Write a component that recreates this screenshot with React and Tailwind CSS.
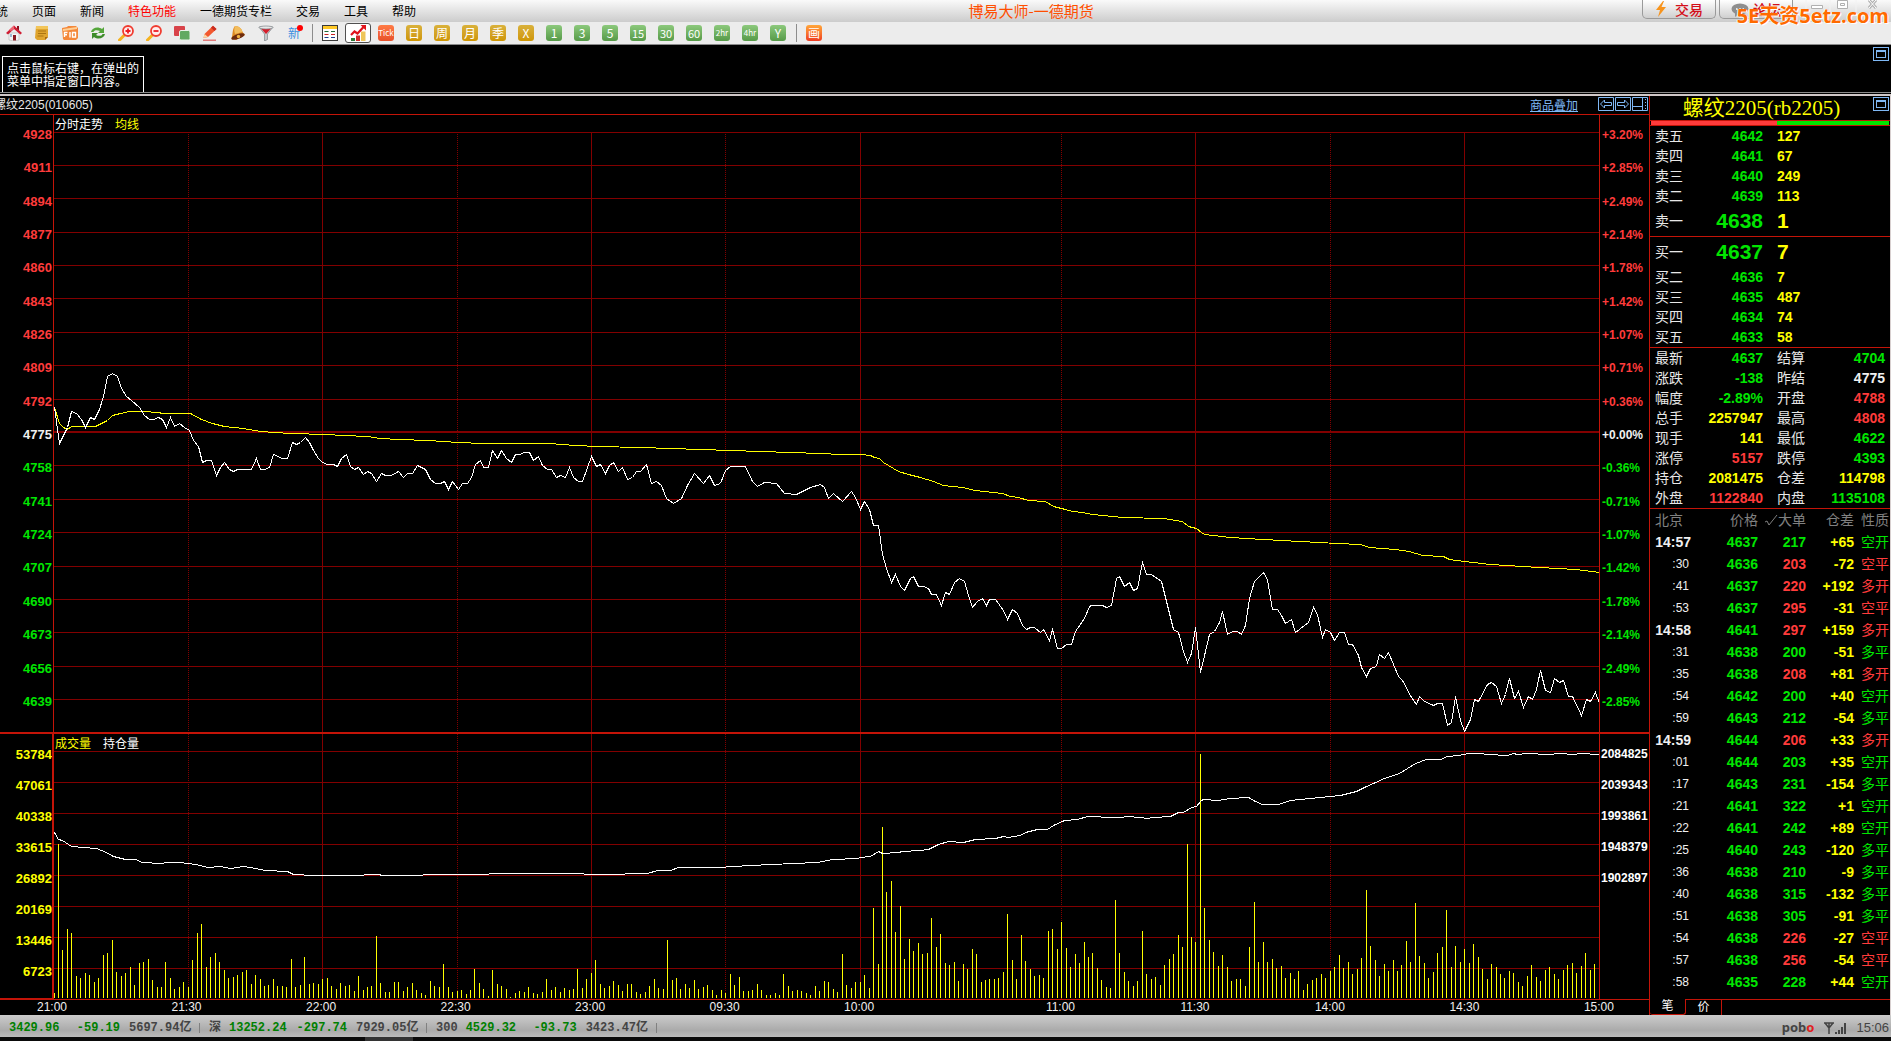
import { useState } from 'react';
import clsx from 'clsx';

const RED = 'text-[#ff3b3b]';
const GREEN = 'text-[#00e600]';
const YELLOW = 'text-[#ffff00]';
const WHITE = 'text-[#f0f0f0]';

const menus = ['系统', '页面', '新闻', '特色功能', '一德期货专栏', '交易', '工具', '帮助'];

const periods = [
  { label: 'Tick', tone: 'orange' },
  { label: '日', tone: 'gold' },
  { label: '周', tone: 'gold' },
  { label: '月', tone: 'gold' },
  { label: '季', tone: 'gold' },
  { label: 'X', tone: 'gold' },
  { label: '1', tone: 'green' },
  { label: '3', tone: 'green' },
  { label: '5', tone: 'green' },
  { label: '15', tone: 'green' },
  { label: '30', tone: 'green' },
  { label: '60', tone: 'green' },
  { label: '2hr', tone: 'green' },
  { label: '4hr', tone: 'green' },
  { label: 'Y', tone: 'green' },
];

const tones = {
  orange: 'bg-linear-to-b from-[#ff7a45] to-[#e8502a]',
  gold: 'bg-linear-to-b from-[#d9b13a] to-[#cf9600]',
  green: 'bg-linear-to-b from-[#8cc97c] to-[#569a48]',
  red: 'bg-linear-to-b from-[#ffa63a] to-[#ee3a22]',
};

const asks = [
  ['卖五', '4642', '127'],
  ['卖四', '4641', '67'],
  ['卖三', '4640', '249'],
  ['卖二', '4639', '113'],
  ['卖一', '4638', '1'],
];

const bids = [
  ['买一', '4637', '7'],
  ['买二', '4636', '7'],
  ['买三', '4635', '487'],
  ['买四', '4634', '74'],
  ['买五', '4633', '58'],
];

const stats = [
  ['最新', '4637', GREEN, '结算', '4704', GREEN],
  ['涨跌', '-138', GREEN, '昨结', '4775', WHITE],
  ['幅度', '-2.89%', GREEN, '开盘', '4788', RED],
  ['总手', '2257947', YELLOW, '最高', '4808', RED],
  ['现手', '141', YELLOW, '最低', '4622', GREEN],
  ['涨停', '5157', RED, '跌停', '4393', GREEN],
  ['持仓', '2081475', YELLOW, '仓差', '114798', YELLOW],
  ['外盘', '1122840', RED, '内盘', '1135108', GREEN],
];

// time, price, lots, lots colour, open interest change, kind, kind colour
const ticks = [
  ['14:57', '4637', '217', GREEN, '+65', '空开', GREEN],
  [':30', '4636', '203', RED, '-72', '空平', RED],
  [':41', '4637', '220', RED, '+192', '多开', RED],
  [':53', '4637', '295', RED, '-31', '空平', RED],
  ['14:58', '4641', '297', RED, '+159', '多开', RED],
  [':31', '4638', '200', GREEN, '-51', '多平', GREEN],
  [':35', '4638', '208', RED, '+81', '多开', RED],
  [':54', '4642', '200', GREEN, '+40', '空开', GREEN],
  [':59', '4643', '212', GREEN, '-54', '多平', GREEN],
  ['14:59', '4644', '206', RED, '+33', '多开', RED],
  [':01', '4644', '203', GREEN, '+35', '空开', GREEN],
  [':17', '4643', '231', GREEN, '-154', '多平', GREEN],
  [':21', '4641', '322', GREEN, '+1', '空开', GREEN],
  [':22', '4641', '242', GREEN, '+89', '空开', GREEN],
  [':25', '4640', '243', GREEN, '-120', '多平', GREEN],
  [':36', '4638', '210', GREEN, '-9', '多平', GREEN],
  [':40', '4638', '315', GREEN, '-132', '多平', GREEN],
  [':51', '4638', '305', GREEN, '-91', '多平', GREEN],
  [':54', '4638', '226', RED, '-27', '空平', RED],
  [':57', '4638', '256', RED, '-54', '空平', RED],
  [':58', '4635', '228', GREEN, '+44', '空开', GREEN],
];

const prices = [
  4928, 4911, 4894, 4877, 4860, 4843, 4826, 4809, 4792, 4775, 4758, 4741, 4724, 4707, 4690, 4673, 4656, 4639,
];
const percents = [
  '+3.20%', '+2.85%', '+2.49%', '+2.14%', '+1.78%', '+1.42%', '+1.07%', '+0.71%', '+0.36%', '+0.00%',
  '-0.36%', '-0.71%', '-1.07%', '-1.42%', '-1.78%', '-2.14%', '-2.49%', '-2.85%',
];
const volumeTicks = [53784, 47061, 40338, 33615, 26892, 20169, 13446, 6723];
const interestTicks = [2084825, 2039343, 1993861, 1948379, 1902897];

const priceRows = [132, 165, 198, 232, 265, 298, 332, 365, 399, 432, 465, 499, 532, 566, 599, 632, 666, 699];
const volumeRows = [751, 782, 813, 844, 875, 906, 937, 968];
const solidCols = [322, 591, 860, 1195, 1464];
const dottedCols = [188, 457, 725, 1061, 1330];

const priceLine =
  '54,407 59,443 63,435 67,427 71,411 76,413 81,419 85,427 90,417 94,419 99,409 103,396 107,376 112,373 117,376 121,388 126,396 131,400 139,407 144,415 149,419 153,419 158,417 162,419 166,427 170,417 174,426 179,423 184,427 189,430 193,440 198,446 202,462 206,460 211,460 216,475 220,467 224,462 229,469 233,471 237,469 251,469 256,458 260,469 264,469 269,467 273,454 282,458 287,458 292,442 296,444 300,442 305,437 309,442 313,450 318,458 322,462 327,464 333,464 337,466 341,458 346,454 350,466 354,469 358,467 363,474 367,471 371,473 376,481 381,473 385,475 391,475 398,471 403,477 407,473 412,473 417,465 425,469 430,479 435,483 440,483 444,481 448,489 452,481 458,489 462,483 467,483 471,477 475,464 480,460 483,467 488,467 492,450 497,458 501,450 506,458 511,462 515,454 519,454 524,452 529,452 533,460 538,456 542,465 547,469 551,469 556,477 560,475 565,477 569,467 573,477 578,481 582,481 591,456 596,466 600,464 605,473 609,465 613,462 618,471 622,467 627,479 632,477 636,471 640,471 646,464 651,483 656,481 661,485 666,498 673,503 681,498 687,485 694,473 703,483 709,475 714,485 720,483 725,470 730,466 745,466 752,481 757,486 764,482 776,483 784,493 796,494 810,487 820,484 824,487 828,498 833,493 842,501 851,491 855,497 860,509 864,501 869,509 873,525 878,525 882,554 886,568 891,582 895,574 900,586 904,590 910,578 913,576 918,586 923,586 928,588 931,594 936,594 941,605 945,592 949,594 954,582 959,578 964,581 968,595 972,607 977,601 982,598 986,605 989,599 995,599 1003,610 1007,619 1012,609 1017,613 1022,625 1026,629 1030,627 1034,627 1040,632 1043,629 1049,640 1052,629 1057,648 1061,648 1066,644 1071,644 1075,631 1084,618 1089,606 1091,605 1102,605 1106,607 1111,605 1116,578 1119,576 1124,586 1129,582 1133,590 1137,588 1142,562 1146,574 1151,574 1161,581 1173,629 1178,632 1183,651 1187,662 1191,653 1195,627 1200,672 1209,634 1214,631 1219,622 1222,611 1227,634 1232,631 1237,631 1241,634 1245,625 1249,598 1254,581 1263,572 1267,579 1272,609 1277,609 1281,615 1285,623 1291,619 1295,632 1308,622 1313,607 1317,614 1322,637 1325,629 1330,632 1334,640 1339,632 1344,632 1348,644 1352,644 1358,655 1361,667 1366,676 1370,668 1376,666 1379,654 1384,658 1388,652 1393,664 1398,676 1402,680 1411,697 1416,704 1419,696 1424,701 1433,705 1437,703 1442,703 1447,725 1451,722 1455,696 1460,720 1464,731 1470,719 1474,699 1478,701 1487,684 1491,682 1496,686 1501,703 1505,694 1509,678 1514,698 1518,691 1523,707 1528,696 1532,699 1536,689 1540,670 1545,690 1550,692 1554,678 1559,682 1563,680 1568,696 1572,696 1581,715 1586,699 1590,701 1595,692 1599,703';

const averageLine =
  '54,407 59,423 63,427 67,429 71,426 79,426 95,426 101,423 107,420 112,415 120,413 129,411 145,411 165,413 190,413 201,419 212,423 224,426 243,428 260,431 290,433 326,434 343,435 367,436 380,438 398,439 428,440 458,442 483,443 549,443 575,445 597,446 640,447 700,449 760,451 820,453 840,454 860,454 870,455 874,457 879,458 883,462 888,465 898,471 908,474 920,477 933,481 943,485 962,487 975,490 1002,493 1010,496 1018,497 1028,500 1045,501 1053,506 1065,509 1072,511 1082,512 1092,514 1113,516 1122,517 1163,518 1182,521 1188,526 1196,528 1201,532 1204,534 1230,537 1263,539 1300,541 1337,543 1360,544 1369,547 1395,549 1409,551 1422,555 1443,556 1449,559 1464,561 1490,564 1522,566 1557,568 1575,569 1599,572';

const interestLine =
  '54,832 58,839 62,840 71,846 83,847 96,848 106,852 113,856 125,859 135,859 142,862 160,863 167,862 180,862 195,864 208,867 220,866 230,868 243,866 255,868 265,870 287,871 293,874 313,875 360,875 367,874 378,874 382,875 413,875 433,874 457,874 480,874 497,873 527,873 577,873 590,874 613,874 637,873 647,873 657,870 670,870 678,867 718,867 750,865 793,863 817,862 832,859 857,858 860,857 870,856 878,851 882,853 898,852 902,851 920,850 928,849 938,844 948,841 963,842 975,839 995,838 1003,836 1008,837 1020,835 1025,832 1037,829 1047,829 1053,825 1064,820 1077,819 1087,816 1113,817 1120,817 1127,816 1140,817 1147,818 1153,817 1170,816 1178,812 1183,812 1191,807 1196,806 1201,800 1203,799 1217,800 1230,798 1248,797 1255,801 1262,804 1278,804 1290,800 1320,797 1340,795 1356,791 1364,787 1384,778 1399,773 1415,763 1426,759 1440,759 1447,756 1458,755 1468,753 1480,753 1487,754 1507,755 1513,753 1517,754 1527,753 1547,754 1560,753 1573,754 1580,753 1599,754';

// one bar per minute, 21:00 to 15:00
const volumes = [
  5, 154, 48, 69, 65, 22, 20, 25, 23, 16, 20, 43, 45, 58, 26, 22, 25, 31, 13, 35, 36, 39, 18, 11, 11, 36, 20, 9, 11, 16,
  11, 38, 65, 74, 31, 41, 45, 36, 28, 20, 21, 23, 26, 28, 14, 23, 19, 12, 13, 19, 12, 12, 11, 39, 11, 13, 41, 14, 15, 14,
  19, 20, 12, 9, 15, 12, 13, 7, 22, 8, 11, 12, 62, 15, 6, 6, 16, 16, 7, 11, 15, 8, 5, 3, 17, 12, 11, 34, 11, 6,
  7, 8, 4, 8, 29, 15, 9, 2, 28, 14, 12, 9, 1, 5, 7, 6, 11, 5, 4, 6, 19, 8, 11, 6, 10, 8, 9, 29, 10, 19,
  25, 38, 14, 10, 12, 17, 13, 7, 14, 14, 6, 4, 6, 12, 19, 10, 9, 58, 18, 20, 9, 14, 10, 18, 9, 11, 13, 8, 3, 8,
  5, 24, 13, 21, 7, 7, 8, 14, 8, 3, 3, 5, 3, 24, 12, 7, 8, 7, 5, 3, 12, 7, 17, 16, 9, 6, 44, 13, 10, 16,
  16, 23, 10, 90, 34, 171, 106, 117, 66, 92, 39, 59, 47, 55, 44, 45, 80, 51, 64, 35, 33, 36, 17, 34, 29, 49, 44, 16, 18, 19,
  19, 20, 26, 84, 38, 19, 63, 37, 29, 22, 23, 20, 67, 69, 49, 76, 50, 31, 44, 35, 56, 41, 45, 30, 18, 11, 10, 98, 45, 26,
  17, 12, 17, 67, 24, 19, 21, 13, 33, 39, 44, 63, 51, 154, 61, 56, 244, 90, 58, 46, 32, 43, 31, 17, 19, 19, 12, 51, 96, 36,
  56, 36, 39, 30, 32, 20, 25, 19, 27, 8, 14, 18, 20, 24, 20, 27, 31, 43, 30, 36, 24, 29, 40, 108, 52, 38, 22, 34, 27, 38,
  27, 33, 57, 36, 95, 42, 35, 20, 26, 45, 51, 88, 31, 52, 36, 49, 35, 54, 41, 29, 19, 34, 31, 24, 20, 27, 25, 16, 12, 22,
  33, 21, 17, 28, 31, 24, 19, 28, 33, 35, 25, 32, 45, 28, 34, 51,
];

const minuteWidth = 1545 / 345;
const volumePath = volumes.map((h, i) => `M${Math.floor(54 + i * minuteWidth) + 0.5} 998V${998 - h}`).join('');

const quotes = [
  { name: '', price: '3429.96', change: '-59.19', amount: '5697.94亿', width: 'w-[48px]' },
  { name: '深', price: '13252.24', change: '-297.74', amount: '7929.05亿', width: 'w-[55px]' },
  { name: '300', price: '4529.32', change: '-93.73', amount: '3423.47亿', width: 'w-[48px]' },
];

const toolIcons = {
  首页: (
    <>
      <path d="M11 1h2v4h-2z" fill="#8e1220" />
      <path d="M3 8h10v7l-5 1-5-1z" fill="#f4f4f4" stroke="#a9a9a9" strokeWidth=".5" />
      <path d="M8 .5 16 8l-1.6 1.6L8 4 2 9.600 0 8z" fill="#cf1d33" />
      <path d="M8 .5 3 5l2 1 3-2z" fill="#ef6472" />
      <path d="M7 10h3v5.500H7z" fill="#8b1a22" />
      <path d="M4 9h2v3H4z" fill="#9db9d2" />
    </>
  ),
  备忘: (
    <>
      <path d="M2 1h12v11l-3 3H3L1 13z" fill="#e0a52e" />
      <path d="M2 1h12v3H2z" fill="#f2c55a" />
      <path d="M4 6h8M4 8.500h8M3.500 11h6" stroke="#ab7410" strokeWidth="1" />
      <path d="m14 12-3 3v-3z" fill="#a8690b" />
    </>
  ),
  F10: (
    <>
      <path d="M0 3 5 2l1-1h8l2 2v10l-2 2H2L1 14z" fill="#f4883a" />
      <path d="m1 4 14-2v2L1 6z" fill="#ffd096" />
      <path d="M2.500 12V7.500h3M2.500 9.800h2.500M8 7v5.500M10.500 7.500h3v4.500h-3z" stroke="#fff" strokeWidth="1.400" fill="none" />
    </>
  ),
  刷新: (
    <>
      <path d="M1 7c1-4.500 7-6 11-3l2-2v6H8l2-2C7 4.500 4 5 3.500 7z" fill="#54a63a" />
      <path d="M15 9c-1 4.500-7 6-11 3l-2 2V8h6l-2 2c3 1.500 6 1 6.500-1z" fill="#3d8c2a" />
    </>
  ),
  放大: (
    <>
      <path d="m1.500 15 5-5" stroke="#f5b321" strokeWidth="3" strokeLinecap="round" />
      <circle cx="10" cy="6" r="5" fill="#ffecec" stroke="#f03c30" strokeWidth="1.800" />
      <path d="M7.500 6h5M10 3.500v5" stroke="#ee1c25" strokeWidth="1.800" />
    </>
  ),
  缩小: (
    <>
      <path d="m1.500 15 5-5" stroke="#f5b321" strokeWidth="3" strokeLinecap="round" />
      <circle cx="10" cy="6" r="5" fill="#ffecec" stroke="#f03c30" strokeWidth="1.800" />
      <path d="M7.500 6h5" stroke="#ee1c25" strokeWidth="1.800" />
    </>
  ),
  叠加: (
    <>
      <rect x="0" y="1" width="11" height="10" rx="1" fill="#d8434a" />
      <rect x="5.500" y="5.500" width="10.500" height="9.500" rx="1.500" fill="#62aa62" stroke="#e8f3e8" strokeWidth="1" />
    </>
  ),
  画线: (
    <>
      <path d="m1.500 13 1-4L11 .8 14.500 4 6 12z" fill="#f2582f" />
      <path d="m11 .8 3.500 3.200-2 2L9 2.800z" fill="#c92d20" />
      <path d="m1.500 13 1-4L6 12z" fill="#f9d7a2" />
      <path d="M1 15.200h13" stroke="#e05d5d" strokeWidth="1.200" />
    </>
  ),
  预警: (
    <>
      <path d="M5 1c4 0 7 3 7.500 6l2.500 3-9 5-4.500-1.500C3 10 2 4 5 1z" fill="#dd8a22" />
      <path d="M5 1c4 0 7 3 7.500 6L5 9C4 6 4 3 5 1z" fill="#f3bd5c" />
      <ellipse cx="8" cy="11.500" rx="7" ry="2.400" transform="rotate(-20 8 11.500)" fill="#6d2c0e" />
      <circle cx="8.500" cy="11.500" r="1.700" fill="#f0b23f" />
    </>
  ),
  选股: (
    <>
      <path d="M1 2h14L9.500 9v5.500L6.500 16V9z" fill="#c4c7ca" stroke="#80858a" strokeWidth=".7" />
      <path d="M3 3.500h10L8 9z" fill="#d51f2c" />
      <ellipse cx="8" cy="2.500" rx="7" ry="1.500" fill="#e8e8e8" stroke="#80858a" strokeWidth=".7" />
    </>
  ),
};

const tableIcon = (
  <>
    <rect x=".5" y=".5" width="15" height="15" fill="#fff" stroke="#3a3a3a" />
    <path d="M1 1h14v3H1z" fill="#ffc928" />
    <path d="M2.500 6.500h4M9 6.500h4" stroke="#1f6b38" strokeWidth="1.200" />
    <path d="M2.500 9.500h4M9 9.500h4" stroke="#c22" strokeWidth="1.200" />
    <path d="M2.500 12.500h4M9 12.500h4" stroke="#1d3e8c" strokeWidth="1.200" />
  </>
);

const trendIcon = (
  <>
    <path d="M1 13h4v3H1z" fill="#2e7a3a" />
    <path d="M6 10.500h4V16H6z" fill="#d42a2a" />
    <path d="M11 6.500h4.500V16H11z" fill="#eec55a" />
    <path d="m1 10 3.500-3.500 3 2L14 1.500" stroke="#e0141c" strokeWidth="2.200" fill="none" />
    <path d="M10.500 0H16v5.500z" fill="#e0141c" />
  </>
);

const ToolButton = ({ label, active, children }) => (
  <button
    aria-label={label}
    className={clsx(
      'w-[26px] h-5 mx-px flex items-center justify-center rounded-[3px]',
      active && 'bg-white border border-[#505050]'
    )}
  >
    {children}
  </button>
);

const Glyph = ({ children }) => (
  <svg viewBox="0 0 16 16" className="w-4 h-4 shrink-0">
    {children}
  </svg>
);

const PeriodBadge = ({ label, tone }) => (
  <span
    className={clsx(
      'w-4 h-4 rounded-[3px] flex items-center justify-center text-white leading-4',
      label.length > 2 ? 'text-[8px]' : label.length > 1 ? 'text-[11px]' : 'text-xs',
      tones[tone]
    )}
  >
    {label}
  </span>
);

const WindowIcon = () => (
  <button aria-label="最大化窗口" className="w-4 h-[14px] border border-[#7fb8f5] flex items-center justify-center">
    <span className="w-[10px] h-2 border border-t-2 border-[#7fb8f5]" />
  </button>
);

const MenuBar = () => (
  <header className="h-[22px] flex items-center bg-linear-to-b from-[#fafafa] to-[#cccccc] text-black">
    <nav className="flex -ml-[28px]">
      {menus.map((m) => (
        <button key={m} className={clsx('px-3 text-xs leading-5 whitespace-nowrap', m === '特色功能' && 'text-[#ff0000]')}>
          {m}
        </button>
      ))}
    </nav>
    <h1 className="flex-1 pr-2 text-center text-[15px] leading-5 text-[#ff4e00]">博易大师-一德期货</h1>
    <div className="relative flex w-[249px] h-[22px]">
      <button className="w-[74px] h-[19px] border border-t-0 border-[#9a9a9a] rounded-b-[5px] bg-linear-to-b from-white to-[#cfcfcf] flex items-center justify-center gap-2 text-sm font-medium leading-4 text-[#d40f1a]">
        <svg viewBox="0 0 12 16" className="w-3 h-4">
          <path d="M8 0 1 9h4l-2 7 8-10H6.500L9 0z" fill="#f7941d" />
        </svg>
        交易
      </button>
      <button className="w-[74px] h-[19px] ml-[3px] border border-t-0 border-[#9a9a9a] rounded-b-[5px] bg-linear-to-b from-white to-[#cfcfcf] flex items-center justify-center gap-1 text-sm font-medium leading-4 text-[#d40f1a]">
        <svg viewBox="0 0 18 16" className="w-[18px] h-4">
          <ellipse cx="9" cy="8" rx="8.500" ry="5.500" fill="#8e8e8e" />
          <path d="m4 11 0 5 5-4z" fill="#8e8e8e" />
          <path d="M5 8h1.500M8.300 8h1.500M11.600 8H13" stroke="#fff" strokeWidth="1.600" />
        </svg>
        论坛
      </button>
      <svg viewBox="0 0 90 16" className="w-[90px] h-4 ml-[3px]" fill="none" stroke="#b0b0b0">
        <path d="M10 0v16M34 0v16M60 0v16" stroke="#f2f2f2" />
        <path d="M15.500 5.500h11v3h-11z" fill="#fff" />
        <path d="M41.500.5h10v8h-10zM44.500 3.500h4v2h-4z" fill="#fff" />
        <path d="m73 0 7 8M80 0l-7 8" strokeWidth="3" />
        <path d="m73 0 7 8M80 0l-7 8" stroke="#fff" />
      </svg>
      <span className="absolute right-[2px] top-[2px] z-10 whitespace-nowrap font-['Open_Sans','Noto_Sans_CJK_SC',sans-serif] text-xl leading-7 font-bold text-[#ff6a00] [text-shadow:1px_1px_0_#fff,-1px_0_0_#fff]">
        5E天资5etz.com
      </span>
    </div>
  </header>
);

const Toolbar = () => (
  <div className="h-[23px] flex items-center bg-[#ececec] border-b border-[#8a8a8a]">
    {Object.entries(toolIcons).map(([name, icon]) => (
      <ToolButton key={name} label={name}>
        <Glyph>{icon}</Glyph>
      </ToolButton>
    ))}
    <ToolButton label="新">
      <span className="relative text-xs leading-4 text-[#3d8fe0]">
        新
        <i className="absolute -right-[3px] top-0 w-[6px] h-[6px] rounded-full bg-[#ff0000]" />
      </span>
    </ToolButton>
    <span className="w-px h-[18px] mx-[3px] ml-1 bg-[#8c8c8c]" />
    <ToolButton label="报价表">
      <Glyph>{tableIcon}</Glyph>
    </ToolButton>
    <ToolButton label="分时图" active>
      <Glyph>{trendIcon}</Glyph>
    </ToolButton>
    {periods.map((p) => (
      <ToolButton key={p.label} label={p.label}>
        <PeriodBadge {...p} />
      </ToolButton>
    ))}
    <span className="w-px h-[18px] mx-[3px] ml-1 bg-[#8c8c8c]" />
    <ToolButton label="画">
      <PeriodBadge label="画" tone="red" />
    </ToolButton>
  </div>
);

const AxisLabels = ({ items, className, itemClass }) => (
  <div className={clsx('flex flex-col font-["Liberation_Sans",sans-serif] font-bold', className)}>
    {items.map((item, i) => (
      <span key={item} className={itemClass(i)}>
        {item}
      </span>
    ))}
  </div>
);

const levelColor = (i) => clsx('leading-4', i < 9 ? RED : i === 9 ? WHITE : GREEN);

const GridColumns = ({ top, bottom }) => (
  <>
    {solidCols.map((x) => (
      <line key={x} x1={x + 0.5} x2={x + 0.5} y1={top} y2={bottom} vectorEffect="non-scaling-stroke" />
    ))}
    {dottedCols.map((x) => (
      <line key={x} x1={x + 0.5} x2={x + 0.5} y1={top} y2={bottom} strokeDasharray="1 1" vectorEffect="non-scaling-stroke" />
    ))}
  </>
);

const PriceChart = () => (
  <div className="flex border-b-2 border-[#c41408]">
    <AxisLabels
      items={prices}
      className="w-[53px] pr-px pt-3 pb-[22px] justify-between text-right text-[13px]"
      itemClass={levelColor}
    />
    <div className="flex-1 min-w-0 border-x border-[#c41408]">
      <div className="h-[17px] flex gap-3 pl-px text-xs leading-[17px]">
        <span className="text-white">分时走势</span>
        <span className={YELLOW}>均线</span>
      </div>
      <svg viewBox="54 132 1545 600" preserveAspectRatio="none" shapeRendering="crispEdges" className="block w-full h-[600px]">
        <g stroke="#820000">
          {priceRows.map((y, i) => (
            <line key={y} x1="54" x2="1599" y1={i === 9 ? y : y + 0.5} y2={i === 9 ? y : y + 0.5} strokeWidth={i === 9 ? 2 : 1} />
          ))}
          <GridColumns top={132} bottom={732} />
        </g>
        <g fill="none" transform="translate(.5 .5)">
          <polyline points={averageLine} stroke="#ffff00" vectorEffect="non-scaling-stroke" />
          <polyline points={priceLine} stroke="#ffffff" vectorEffect="non-scaling-stroke" />
        </g>
      </svg>
    </div>
    <AxisLabels items={percents} className="w-[49px] pt-3 pb-[22px] pl-[2px] justify-between text-xs" itemClass={levelColor} />
  </div>
);

const VolumeChart = () => (
  <div className="flex border-b border-[#c41408]">
    <AxisLabels
      items={volumeTicks}
      className="w-[52px] pt-[5px] text-right text-[13px] border-b border-[#c41408]"
      itemClass={() => clsx('leading-[31px]', YELLOW)}
    />
    <div className="relative flex-1 min-w-0 border-l-2 border-r border-[#c41408]">
      <div className="absolute left-px top-[1px] flex gap-3 text-xs leading-4">
        <span className={YELLOW}>成交量</span>
        <span className="text-white">持仓量</span>
      </div>
      <svg viewBox="54 734 1545 265" preserveAspectRatio="none" shapeRendering="crispEdges" className="block w-full h-[265px]">
        <g stroke="#820000">
          {volumeRows.map((y) => (
            <line key={y} x1="54" x2="1599" y1={y + 0.5} y2={y + 0.5} />
          ))}
          <GridColumns top={734} bottom={999} />
        </g>
        <path d={volumePath} stroke="#ffff00" fill="none" vectorEffect="non-scaling-stroke" />
        <polyline
          points={interestLine}
          transform="translate(.5 .5)"
          stroke="#ffffff"
          fill="none"
          vectorEffect="non-scaling-stroke"
        />
      </svg>
    </div>
    <AxisLabels items={interestTicks} className="w-[49px] pt-[5px] pl-px text-xs" itemClass={() => 'leading-[31px] text-white'} />
  </div>
);

const TimeAxis = () => (
  <div className="flex ml-[52px] mr-[50px] h-[15px] font-['Liberation_Sans',sans-serif] text-xs leading-[15px] text-[#f0f0f0]">
    {['21:00', '21:30', '22:00', '22:30', '23:00', '09:30', '10:00', '11:00', '11:30', '14:00', '14:30'].map((t) => (
      <span key={t} className={clsx('min-w-0', t === '10:00' ? 'flex-[45]' : 'flex-[30]')}>
        <span className="-ml-[15px]">{t}</span>
      </span>
    ))}
    <span className="w-0 -ml-[15px] mr-[15px] whitespace-nowrap">15:00</span>
  </div>
);

const ChartPane = () => (
  <section className="flex-1 min-w-0">
    <div className="h-[19px] flex items-center border-b border-[#c41408] text-xs">
      <h2 className="flex-1 -ml-[6px] leading-4 text-[#e8e8e8] font-['Liberation_Sans','Noto_Sans_CJK_SC',sans-serif]">
        螺纹2205(010605)
      </h2>
      <a href="#overlay" className="mr-5 leading-4 underline text-[#7fb8f5]">
        商品叠加
      </a>
      <div className="flex gap-px pr-px pb-[2px]">
        <button aria-label="前一个">
          <svg viewBox="0 0 16 14" className="w-4 h-[14px]" fill="none" stroke="#7fb8f5">
            <path d="M.5.5h15v13H.5zM2.500 7l4-4v2.500h7v3h-7V11z" />
          </svg>
        </button>
        <button aria-label="后一个">
          <svg viewBox="0 0 16 14" className="w-4 h-[14px]" fill="none" stroke="#7fb8f5">
            <path d="M.5.5h15v13H.5zM13.500 7l-4-4v2.500h-7v3h7V11z" />
          </svg>
        </button>
        <button aria-label="布局">
          <svg viewBox="0 0 16 14" className="w-4 h-[14px]" fill="none" stroke="#7fb8f5">
            <path d="M.5.5h15v13H.5zM1 9.500h9.500V1M10.500 9v4M13.500 2v1M13.500 5v1M13.500 8v1M13.500 11v1" />
          </svg>
        </button>
      </div>
    </div>
    <PriceChart />
    <VolumeChart />
    <TimeAxis />
  </section>
);

const BookTable = ({ rows, best }) => (
  <table className="w-full table-fixed border-b border-[#c41408] border-separate border-spacing-0">
    <colgroup>
      <col className="w-10" />
      <col className="w-[73px]" />
      <col />
    </colgroup>
    <tbody>
      {rows.map(([name, price, lots]) => {
        const big = name === best;
        return (
          <tr key={name} className={big ? 'h-[30px]' : 'h-5'}>
            <th className="p-0 pl-[5px] text-left text-sm leading-5 font-normal text-[#e8e8e8]">{name}</th>
            <td className={clsx('p-0 text-right font-bold leading-5', GREEN, big ? 'text-[21px]' : 'text-sm')}>{price}</td>
            <td className={clsx('p-0 pl-[14px] font-bold leading-5', YELLOW, big ? 'text-[21px]' : 'text-sm')}>{lots}</td>
          </tr>
        );
      })}
    </tbody>
  </table>
);

const QuotePanel = () => {
  const [tab, setTab] = useState('笔');

  return (
    <aside className="w-[242px] shrink-0 flex flex-col border-l border-l-[#c41408] border-r border-r-[#d8d0d0] font-['Liberation_Sans','Noto_Sans_CJK_SC',sans-serif]">
      <div className="h-6 flex justify-between">
        <h2 className="flex-1 text-center text-[21px] leading-6 text-[#ffff00] font-['Liberation_Serif','Noto_Sans_CJK_SC',serif]">
          螺纹2205(rb2205)
        </h2>
        <div className="pt-px pr-px">
          <WindowIcon />
        </div>
      </div>
      <div className="h-[6px] flex border-y border-[#c41408] pl-px pr-px">
        <span className="flex-[126] bg-[#ff3b3b]" />
        <span className="flex-[112] bg-[#00e600]" />
      </div>

      <BookTable rows={asks} best="卖一" />
      <BookTable rows={bids} best="买一" />

      <table className="w-full table-fixed border-b border-[#c41408] border-separate border-spacing-0 text-sm leading-5">
        <colgroup>
          <col className="w-10" />
          <col className="w-[73px]" />
          <col className="w-[50px]" />
          <col />
        </colgroup>
        <tbody>
          {stats.map(([a, av, ac, b, bv, bc]) => (
            <tr key={a} className="h-5">
              <th className="p-0 pl-[5px] text-left font-normal text-[#e8e8e8]">{a}</th>
              <td className={clsx('p-0 text-right font-bold', ac)}>{av}</td>
              <th className="p-0 pl-[14px] text-left font-normal text-[#e8e8e8] whitespace-nowrap">{b}</th>
              <td className={clsx('p-0 pr-[5px] text-right font-bold', bc)}>{bv}</td>
            </tr>
          ))}
        </tbody>
      </table>

      <table className="w-full table-fixed border-separate border-spacing-0 text-sm leading-[22px] mb-[6px]">
        <colgroup>
          <col className="w-[41px]" />
          <col className="w-[67px]" />
          <col className="w-12" />
          <col className="w-12" />
          <col />
        </colgroup>
        <thead>
          <tr className="h-[22px] text-right whitespace-nowrap text-[#808080]">
            <th className="p-0 pl-[5px] text-left font-normal">北京</th>
            <th className="p-0 font-normal">价格</th>
            <th className="p-0 font-normal">
              <span className="flex justify-end items-center">
                <svg viewBox="0 0 14 14" className="w-[14px] h-[14px]" fill="none" stroke="currentColor">
                  <path d="m1 9 2-1 2 4 8-10" />
                </svg>
                大单
              </span>
            </th>
            <th className="p-0 font-normal">仓差</th>
            <th className="p-0 pr-px font-normal">性质</th>
          </tr>
        </thead>
        <tbody>
          {ticks.map(([time, price, lots, lotsColor, diff, kind, kindColor], i) => (
            <tr key={i} className="h-[22px] text-right font-bold">
              <td className={clsx('p-0 text-[#f0f0f0]', time[0] === ':' && 'pr-[2px] text-xs leading-[22px] font-normal')}>{time}</td>
              <td className={clsx('p-0', GREEN)}>{price}</td>
              <td className={clsx('p-0', lotsColor)}>{lots}</td>
              <td className={clsx('p-0', YELLOW)}>{diff}</td>
              <td className={clsx('p-0 pr-px font-normal', kindColor)}>{kind}</td>
            </tr>
          ))}
        </tbody>
      </table>

      <div className="flex h-4 text-xs leading-[14px] text-white">
        {['笔', '价'].map((name) => (
          <button
            key={name}
            onClick={() => setTab(name)}
            className={clsx(
              'w-9 border-r border-[#c41408] pb-px',
              tab === name ? 'border-b rounded-b-[3px]' : 'border-t'
            )}
          >
            {name}
          </button>
        ))}
        <span className="flex-1 border-t border-[#c41408]" />
      </div>
    </aside>
  );
};

const StatusBar = () => (
  <footer className="h-[22px] flex items-center pl-[9px] pt-[3px] bg-linear-to-b from-[#cccccc] via-[#aaaaaa] via-70% to-[#bbbbbb] font-['Liberation_Mono','Noto_Sans_CJK_SC',monospace] text-xs font-bold text-[#444444]">
    {quotes.map((q) => (
      <div key={q.price} className="flex items-center whitespace-nowrap">
        {q.name && <span className="mr-2">{q.name}</span>}
        <span className={clsx('text-[#008000]', q.width)}>{q.price}</span>
        <span className="w-[63px] text-right text-[#008000]">{q.change}</span>
        <span className="ml-[9px] w-[62px]">{q.amount}</span>
        <span className="w-px h-[10px] ml-2 mr-[9px] bg-[#808080]" />
      </div>
    ))}
    <span className="ml-auto font-['Noto_Sans',sans-serif] text-[13px]">
      pob<span className="text-[#e02020]">o</span>
    </span>
    <svg viewBox="0 0 22 12" className="w-[22px] h-3 ml-[10px]" fill="none" stroke="#444444">
      <path d="M0 1h10M1 1l4 5 4-5M5 1v11" strokeWidth="1.500" />
      <path d="M11 11h2" strokeWidth="2" />
      <path d="M15 12V8M18 12V5M21 12V1" strokeWidth="2" />
    </svg>
    <span className="ml-[10px] mr-[2px] font-['Liberation_Sans',sans-serif] text-[13px] font-normal">15:06</span>
  </footer>
);

const App = () => (
  <div className="min-h-screen bg-black font-['Noto_Sans_CJK_SC',sans-serif]">
    <MenuBar />
    <Toolbar />
    <div className="h-[48px] flex justify-between border-b border-[#8a8a8a]">
      <p className="ml-[2px] mt-[11px] w-[142px] pl-1 pt-1 border border-b-0 border-white text-xs leading-[13px] text-white">
        点击鼠标右键，在弹出的
        <br />
        菜单中指定窗口内容。
      </p>
      <div className="pt-[2px] pr-[2px]">
        <WindowIcon />
      </div>
    </div>
    <div className="mt-px h-[2px] bg-[#d0c8c8]" />
    <main className="flex">
      <ChartPane />
      <QuotePanel />
    </main>
    <StatusBar />
    <div className="h-1 pl-[365px] bg-[#0a0a0a]">
      <div className="w-12 h-1 bg-[#333333]" />
    </div>
  </div>
);

export default App;
